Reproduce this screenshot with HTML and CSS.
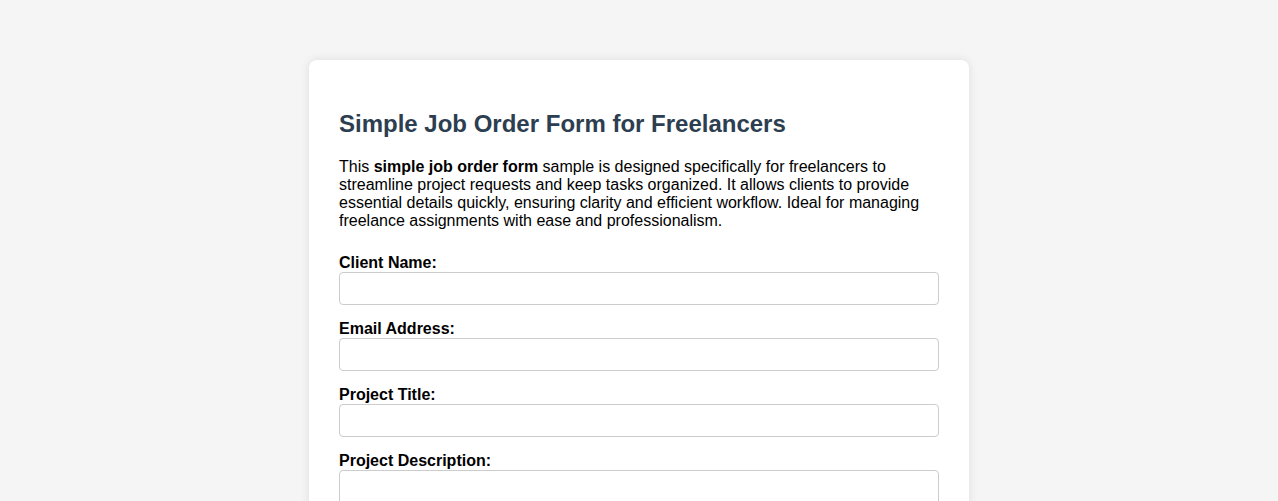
FILE: index.html
```html
<!DOCTYPE html>
<html lang="en">
<head>
<meta charset="utf-8">
<title>Simple Job Order Form for Freelancers</title>
<link rel="stylesheet" href="styles.css">
</head>
<body>
<div class="card">
  <h2 class="title">Simple Job Order Form for Freelancers</h2>
  <p class="intro">This <strong>simple job order form</strong> sample is designed specifically for freelancers to streamline project requests and keep tasks organized. It allows clients to provide essential details quickly, ensuring clarity and efficient workflow. Ideal for managing freelance assignments with ease and professionalism.</p>
  <form class="form">
    <label class="label" for="client">Client Name:</label>
    <input class="field" id="client" type="text">
    <label class="label" for="email">Email Address:</label>
    <input class="field" id="email" type="email">
    <label class="label" for="title">Project Title:</label>
    <input class="field" id="title" type="text">
    <label class="label" for="desc">Project Description:</label>
    <textarea class="field area" id="desc" rows="5"></textarea>
    <label class="label" for="deadline">Deadline:</label>
    <input class="field" id="deadline" type="text">
    <label class="label" for="budget">Budget:</label>
    <input class="field" id="budget" type="text">
    <button class="submit" type="submit">Submit Order</button>
  </form>
</div>
</body>
</html>
```
FILE: styles.css
```css
html, body {
  margin: 0;
  background: #f5f5f5;
  font-family: "Liberation Sans", Arial, sans-serif;
  color: #000;
}
body {
  padding: 60px 0;
}
.card {
  width: 600px;
  margin: 0 auto;
  padding: 30px;
  background: #fff;
  border-radius: 8px;
  box-shadow: 0 0 10px rgba(0, 0, 0, 0.1);
}
.title {
  margin: 20px 0;
  font-size: 24px;
  font-weight: bold;
  color: #2c3e50;
}
.intro {
  margin: 0 0 24px;
  font-size: 16px;
}
.form {
  margin: 0;
}
.label {
  display: block;
  font-weight: bold;
  font-size: 16px;
  margin-bottom: 0;
}
.field {
  display: block;
  width: 100%;
  box-sizing: border-box;
  padding: 8px;
  margin: 0 0 15px;
  border: 1px solid #ccc;
  border-radius: 4px;
  font-family: "Liberation Sans", Arial, sans-serif;
  font-size: 13.333px;
  height: 33px;
}
.area {
  height: 100px;
  resize: vertical;
}
.submit {
  padding: 10px 20px;
  background: #2c3e50;
  color: #fff;
  border: none;
  border-radius: 4px;
  font-size: 16px;
}
```
